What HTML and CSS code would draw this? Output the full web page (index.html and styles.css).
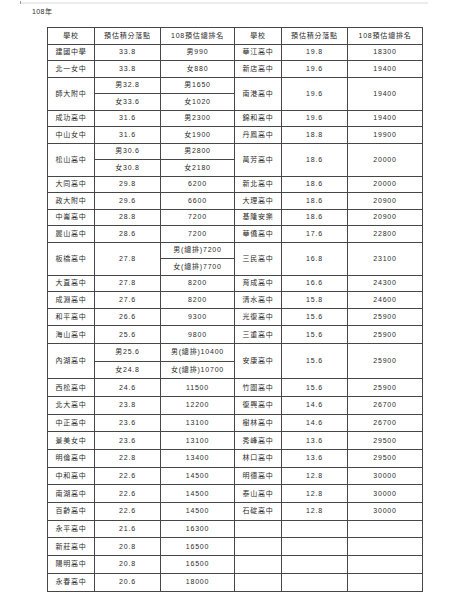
FILE: index.html
```html
<!DOCTYPE html>
<html lang="zh-Hant">
<head>
<meta charset="utf-8">
<title>108年</title>
<link rel="stylesheet" href="styles.css">
</head>
<body>
<div class="page">
  <div class="topbar"><span class="tick"></span></div>
  <div class="title">108年</div>
  <table class="grid">
    <colgroup>
      <col class="c-name"><col class="c-score"><col class="c-rank">
      <col class="c-name"><col class="c-score"><col class="c-rank2">
    </colgroup>
    <tbody>
      <tr class="s"><td>學校</td><td>預估積分落點</td><td>108預估總排名</td><td>學校</td><td>預估積分落點</td><td>108預估總排名</td></tr>
      <tr class="s"><td>建國中學</td><td>33.8</td><td>男990</td><td>華江高中</td><td>19.8</td><td>18300</td></tr>
      <tr class="s"><td>北一女中</td><td>33.8</td><td>女880</td><td>新店高中</td><td>19.6</td><td>19400</td></tr>
      <tr class="s"><td rowspan="2">師大附中</td><td>男32.8</td><td>男1650</td><td rowspan="2">南港高中</td><td rowspan="2">19.6</td><td rowspan="2">19400</td></tr>
      <tr class="s"><td>女33.6</td><td>女1020</td></tr>
      <tr class="s"><td>成功高中</td><td>31.6</td><td>男2300</td><td>錦和高中</td><td>19.6</td><td>19400</td></tr>
      <tr class="s"><td>中山女中</td><td>31.6</td><td>女1900</td><td>丹鳳高中</td><td>18.8</td><td>19900</td></tr>
      <tr class="s"><td rowspan="2">松山高中</td><td>男30.6</td><td>男2800</td><td rowspan="2">萬芳高中</td><td rowspan="2">18.6</td><td rowspan="2">20000</td></tr>
      <tr class="s"><td>女30.8</td><td>女2180</td></tr>
      <tr class="s"><td>大同高中</td><td>29.8</td><td>6200</td><td>新北高中</td><td>18.6</td><td>20000</td></tr>
      <tr class="s"><td>政大附中</td><td>29.6</td><td>6600</td><td>大理高中</td><td>18.6</td><td>20900</td></tr>
      <tr class="s"><td>中崙高中</td><td>28.8</td><td>7200</td><td>基隆安樂</td><td>18.6</td><td>20900</td></tr>
      <tr class="s"><td>麗山高中</td><td>28.6</td><td>7200</td><td>華僑高中</td><td>17.6</td><td>22800</td></tr>
      <tr class="s"><td rowspan="2">板橋高中</td><td rowspan="2">27.8</td><td>男(總排)7200</td><td rowspan="2">三民高中</td><td rowspan="2">16.8</td><td rowspan="2">23100</td></tr>
      <tr class="s"><td>女(總排)7700</td></tr>
      <tr class="s"><td>大直高中</td><td>27.8</td><td>8200</td><td>育成高中</td><td>16.6</td><td>24300</td></tr>
      <tr class="s"><td>成淵高中</td><td>27.6</td><td>8200</td><td>清水高中</td><td>15.8</td><td>24600</td></tr>
      <tr class="l"><td>和平高中</td><td>26.6</td><td>9300</td><td>光復高中</td><td>15.6</td><td>25900</td></tr>
      <tr class="l"><td>海山高中</td><td>25.6</td><td>9800</td><td>三重高中</td><td>15.6</td><td>25900</td></tr>
      <tr class="l"><td rowspan="2">內湖高中</td><td>男25.6</td><td>男(總排)10400</td><td rowspan="2">安康高中</td><td rowspan="2">15.6</td><td rowspan="2">25900</td></tr>
      <tr class="l"><td>女24.8</td><td>女(總排)10700</td></tr>
      <tr class="l"><td>西松高中</td><td>24.6</td><td>11500</td><td>竹圍高中</td><td>15.6</td><td>25900</td></tr>
      <tr class="l"><td>北大高中</td><td>23.8</td><td>12200</td><td>復興高中</td><td>14.6</td><td>26700</td></tr>
      <tr class="l"><td>中正高中</td><td>23.6</td><td>13100</td><td>樹林高中</td><td>14.6</td><td>26700</td></tr>
      <tr class="l"><td>景美女中</td><td>23.6</td><td>13100</td><td>秀峰高中</td><td>13.6</td><td>29500</td></tr>
      <tr class="l"><td>明倫高中</td><td>22.8</td><td>13400</td><td>林口高中</td><td>13.6</td><td>29500</td></tr>
      <tr class="l"><td>中和高中</td><td>22.6</td><td>14500</td><td>明德高中</td><td>12.8</td><td>30000</td></tr>
      <tr class="l"><td>南湖高中</td><td>22.6</td><td>14500</td><td>泰山高中</td><td>12.8</td><td>30000</td></tr>
      <tr class="l"><td>百齡高中</td><td>22.6</td><td>14500</td><td>石碇高中</td><td>12.8</td><td>30000</td></tr>
      <tr class="l"><td>永平高中</td><td>21.6</td><td>16300</td><td></td><td></td><td></td></tr>
      <tr class="l"><td>新莊高中</td><td>20.8</td><td>16500</td><td></td><td></td><td></td></tr>
      <tr class="l"><td>陽明高中</td><td>20.8</td><td>16500</td><td></td><td></td><td></td></tr>
      <tr class="l"><td>永春高中</td><td>20.6</td><td>18000</td><td></td><td></td><td></td></tr>
    </tbody>
  </table>
</div>
</body>
</html>
```

FILE: styles.css
```css
html, body {
  margin: 0;
  padding: 0;
  background: #ffffff;
}

.page {
  width: 450px;
  height: 600px;
  overflow: hidden;
  font-family: "Liberation Sans", "Noto Sans CJK TC", sans-serif;
  color: #2b2b2b;
}

.topbar {
  margin: 2px 22px 0 20px;
  height: 2px;
  background: #ececec;
  position: relative;
}

.tick {
  position: absolute;
  left: 0;
  top: -1px;
  width: 1px;
  height: 3px;
  background: #9a9a9a;
}

.title {
  margin: 3px 0 0 32px;
  height: 20px;
  font-size: 7px;
  letter-spacing: 0.4px;
  line-height: 9px;
}

.grid {
  margin-left: 47px;
  border-collapse: collapse;
  table-layout: fixed;
  width: 376px;
}

.c-name { width: 47px; }
.c-score { width: 66px; }
.c-rank { width: 74px; }
.c-rank2 { width: 75px; }

.grid td {
  border: 1px solid #474747;
  padding: 0;
  text-align: center;
  vertical-align: middle;
  font-size: 7px;
  letter-spacing: 0.8px;
  line-height: 8px;
  white-space: nowrap;
  overflow: hidden;
}

.grid tr.s td { height: 15.5px; }
.grid tr.l td { height: 16.7px; }
```
